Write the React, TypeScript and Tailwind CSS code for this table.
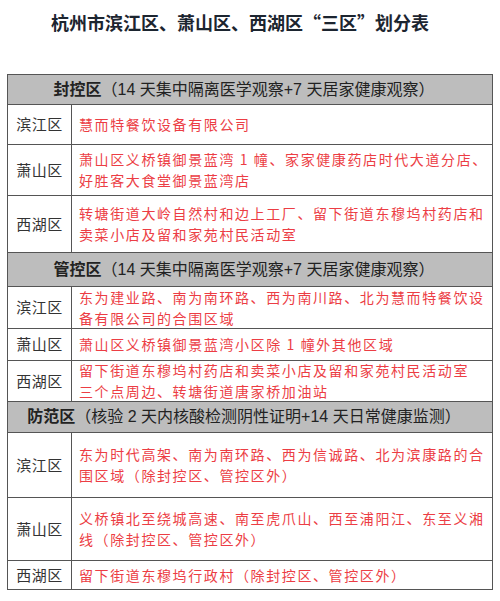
import React from "react";

type Row = { label: string; lines: string[]; h: number };
type Section = { title: string; rest: string; h: number; rows: Row[] };

const sections: Section[] = [
  {
    title: "封控区",
    rest: "（14 天集中隔离医学观察+7 天居家健康观察）",
    h: 30,
    rows: [
      { label: "滨江区", lines: ["慧而特餐饮设备有限公司"], h: 40 },
      {
        label: "萧山区",
        lines: ["萧山区义桥镇御景蓝湾 1 幢、家家健康药店时代大道分店、", "好胜客大食堂御景蓝湾店"],
        h: 51,
      },
      {
        label: "西湖区",
        lines: ["转塘街道大岭自然村和边上工厂、留下街道东穆坞村药店和", "卖菜小店及留和家苑村民活动室"],
        h: 57,
      },
    ],
  },
  {
    title: "管控区",
    rest: "（14 天集中隔离医学观察+7 天居家健康观察）",
    h: 34,
    rows: [
      {
        label: "滨江区",
        lines: ["东为建业路、南为南环路、西为南川路、北为慧而特餐饮设", "备有限公司的合围区域"],
        h: 42,
      },
      { label: "萧山区", lines: ["萧山区义桥镇御景蓝湾小区除 1 幢外其他区域"], h: 32 },
      {
        label: "西湖区",
        lines: ["留下街道东穆坞村药店和卖菜小店及留和家苑村民活动室", "三个点周边、转塘街道唐家桥加油站"],
        h: 41,
      },
    ],
  },
  {
    title: "防范区",
    rest: "（核验 2 天内核酸检测阴性证明+14 天日常健康监测）",
    h: 31,
    rows: [
      {
        label: "滨江区",
        lines: ["东为时代高架、南为南环路、西为信诚路、北为滨康路的合", "围区域（除封控区、管控区外）"],
        h: 65,
      },
      {
        label: "萧山区",
        lines: ["义桥镇北至绕城高速、南至虎爪山、西至浦阳江、东至义湘", "线（除封控区、管控区外）"],
        h: 63,
      },
      { label: "西湖区", lines: ["留下街道东穆坞行政村（除封控区、管控区外）"], h: 29 },
    ],
  },
];

const sans = "font-['Liberation_Sans','Noto_Sans_CJK_SC',sans-serif]";

export default function App() {
  return (
    <div className={`w-[500px] h-[601px] bg-white ${sans}`}>
      <div className="h-[74px] pt-[10px] pr-[20px] text-center text-[18px] leading-[24px] font-bold text-[#1c2530] font-['Noto_Sans_CJK_SC',sans-serif]">
        杭州市滨江区、萧山区、西湖区“三区”划分表
      </div>
      <div className="ml-[7px] w-[486px] border border-[#555] flex flex-col">
        {sections.map((s, si) => (
          <React.Fragment key={si}>
            <div
              className={`flex items-center justify-center bg-[#bdbdbd] text-[16px] text-[#222] pr-[12px] ${si > 0 ? "border-t border-[#555]" : ""}`}
              style={{ height: s.h - (si > 0 ? 0 : 1) }}
            >
              <span className="font-bold">{s.title}</span>
              <span>{s.rest}</span>
            </div>
            {s.rows.map((r, ri) => (
              <div key={ri} className="flex border-t border-[#555]" style={{ height: r.h }}>
                <div className="w-[64px] shrink-0 flex items-center justify-center border-r border-[#555] text-[15px] tracking-[0.5px] text-[#333] font-['Noto_Sans_CJK_SC',serif]">
                  {r.label}
                </div>
                <div className="flex-1 flex flex-col justify-center pl-[7px] text-[14px] leading-[21px] tracking-[1.6px] text-[#ec3d44] font-['Noto_Sans_CJK_SC',serif] whitespace-nowrap">
                  {r.lines.map((l, li) => (
                    <div key={li}>{l}</div>
                  ))}
                </div>
              </div>
            ))}
          </React.Fragment>
        ))}
      </div>
    </div>
  );
}
